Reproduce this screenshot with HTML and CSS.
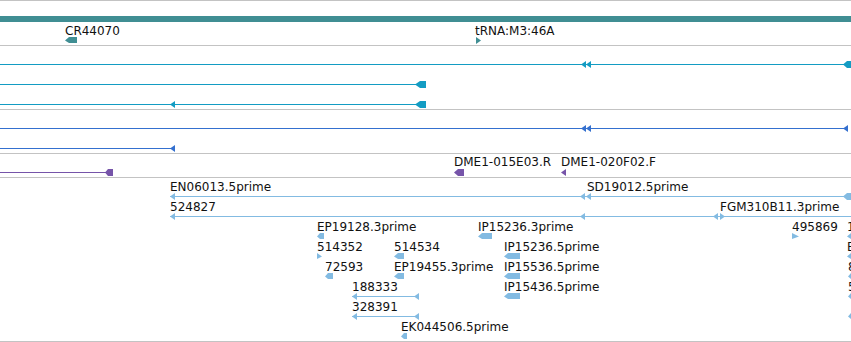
FILE: index.html
```html
<!DOCTYPE html>
<html>
<head>
<meta charset="utf-8">
<link rel="stylesheet" href="styles.css">
</head>
<body>
<div class="browser">
  <div class="track track-first t1">
    <svg class="canvas" width="851" height="44">
      <rect class="teal" x="0" y="15" width="851" height="6"/>
      <text class="lbl" x="65" y="34">CR44070</text>
      <polygon class="teal" points="65,39.5 69,36 77,36 77,42 69,42"/>
      <text class="lbl" x="475" y="34">tRNA:M3:46A</text>
      <polygon class="teal" points="476,36 481,39.5 476,43"/>
    </svg>
  </div>
  <div class="track t2">
    <svg class="canvas" width="851" height="63">
      <g class="cyan">
        <rect x="0" y="18" width="851" height="1"/>
        <polygon points="581,18.5 586,15 586,22"/>
        <polygon points="586,18.5 591,15 591,22"/>
        <polygon points="843,18.5 847,15 851,15 851,22 847,22"/>
        <rect x="0" y="38" width="420" height="1"/>
        <polygon points="415,38.5 420,35 426,35 426,42 420,42"/>
        <rect x="0" y="58" width="420" height="1"/>
        <polygon points="170,58.5 175,55 175,62"/>
        <polygon points="415,58.5 420,55 426,55 426,62 420,62"/>
      </g>
    </svg>
  </div>
  <div class="track t3">
    <svg class="canvas" width="851" height="43">
      <g class="blue">
        <rect x="0" y="18" width="848" height="1"/>
        <polygon points="581,18.5 586,15 586,22"/>
        <polygon points="586,18.5 591,15 591,22"/>
        <polygon points="843,18.5 848,15 848,22"/>
        <rect x="0" y="38" width="172" height="1"/>
        <polygon points="170,38.5 175,35 175,42"/>
      </g>
    </svg>
  </div>
  <div class="track t4">
    <svg class="canvas" width="851" height="23">
      <g class="purple">
        <rect x="0" y="18" width="108" height="1"/>
        <polygon points="105,18.5 108,15 113,15 113,22 108,22"/>
        <polygon points="454,18.5 458,15 464,15 464,22 458,22"/>
        <polygon points="561,18.5 566,15 566,22"/>
      </g>
      <text class="lbl" x="454" y="12">DME1-015E03.R</text>
      <text class="lbl" x="561" y="12">DME1-020F02.F</text>
    </svg>
  </div>
  <div class="track t5">
    <svg class="canvas" width="851" height="163">
      <g class="est">
        <rect x="170" y="18" width="681" height="1"/>
        <polygon points="170,18.5 175,15 175,22"/>
        <polygon points="580,18.5 585,15 585,22"/>
        <polygon points="586,18.5 591,15 591,22"/>
        <polygon points="843,18.5 847,15 851,15 851,22 847,22"/>

        <rect x="170" y="38" width="681" height="1"/>
        <polygon points="170,38.5 175,35 175,42"/>
        <polygon points="580,38.5 585,35 585,42"/>
        <polygon points="713,38.5 718,35 718,42"/>
        <polygon points="720,35 725,38.5 720,42"/>

        <polygon points="317,58.5 320,55 324,55 324,61 320,61"/>
        <polygon points="478,58.5 482,55 492,55 492,61 482,61"/>
        <polygon points="792,55 799,58.5 792,61"/>
        <polygon points="847,58.5 851,55 851,61"/>

        <polygon points="317,75 322,78.5 317,81"/>
        <polygon points="394,78.5 398,75 404,75 404,81 398,81"/>
        <polygon points="504,78.5 508,75 520,75 520,81 508,81"/>
        <polygon points="847,78.5 851,75 851,81"/>

        <polygon points="325,98.5 328,95 333,95 333,101 328,101"/>
        <polygon points="394,98.5 398,95 404,95 404,101 398,101"/>
        <polygon points="504,98.5 508,95 520,95 520,101 508,101"/>
        <polygon points="848,98.5 851,95 851,101"/>

        <rect x="352" y="118" width="66" height="1"/>
        <polygon points="352,118.5 357,115 357,122"/>
        <polygon points="414,118.5 419,115 419,122"/>
        <polygon points="504,118.5 508,115 520,115 520,121 508,121"/>
        <polygon points="848,118.5 851,115 851,121"/>

        <rect x="352" y="138" width="66" height="1"/>
        <polygon points="352,138.5 357,135 357,142"/>
        <polygon points="414,138.5 419,135 419,142"/>
        <polygon points="848,138.5 851,135 851,141"/>

        <polygon points="401,158.5 404,155 407,155 407,161 404,161"/>
      </g>
      <text class="lbl" x="170" y="13">EN06013.5prime</text>
      <text class="lbl" x="587" y="13">SD19012.5prime</text>
      <text class="lbl" x="170" y="33">524827</text>
      <text class="lbl" x="720" y="33">FGM310B11.3prime</text>
      <text class="lbl" x="317" y="53">EP19128.3prime</text>
      <text class="lbl" x="478" y="53">IP15236.3prime</text>
      <text class="lbl" x="792" y="53">495869</text>
      <text class="lbl" x="847" y="53">1</text>
      <text class="lbl" x="317" y="73">514352</text>
      <text class="lbl" x="394" y="73">514534</text>
      <text class="lbl" x="504" y="73">IP15236.5prime</text>
      <text class="lbl" x="847" y="73">E</text>
      <text class="lbl" x="325" y="93">72593</text>
      <text class="lbl" x="394" y="93">EP19455.3prime</text>
      <text class="lbl" x="504" y="93">IP15536.5prime</text>
      <text class="lbl" x="848" y="93">8</text>
      <text class="lbl" x="352" y="113">188333</text>
      <text class="lbl" x="504" y="113">IP15436.5prime</text>
      <text class="lbl" x="848" y="113">5</text>
      <text class="lbl" x="352" y="133">328391</text>
      <text class="lbl" x="401" y="153">EK044506.5prime</text>
    </svg>
  </div>
</div>
</body>
</html>
```

FILE: styles.css
```css
html, body {
  margin: 0;
  padding: 0;
  background: #ffffff;
}
.browser {
  width: 851px;
  height: 342px;
  overflow: hidden;
  display: flex;
  flex-direction: column;
}
.track {
  border-bottom: 1px solid #c3c3c3;
  overflow: hidden;
  flex: none;
}
.track-first {
  border-top: 1px solid #c3c3c3;
}
.t1 { height: 44px; }
.t2 { height: 63px; }
.t3 { height: 43px; }
.t4 { height: 23px; }
.t5 { height: 163px; }
.canvas {
  display: block;
}
.lbl {
  font-family: "DejaVu Sans", "Noto Sans", sans-serif;
  font-size: 12px;
  fill: #111111;
}
.teal { fill: #408e93; }
.cyan { fill: #139cc3; }
.blue { fill: #3470cf; }
.purple { fill: #7654a9; }
.est { fill: #83bbe2; }
```
